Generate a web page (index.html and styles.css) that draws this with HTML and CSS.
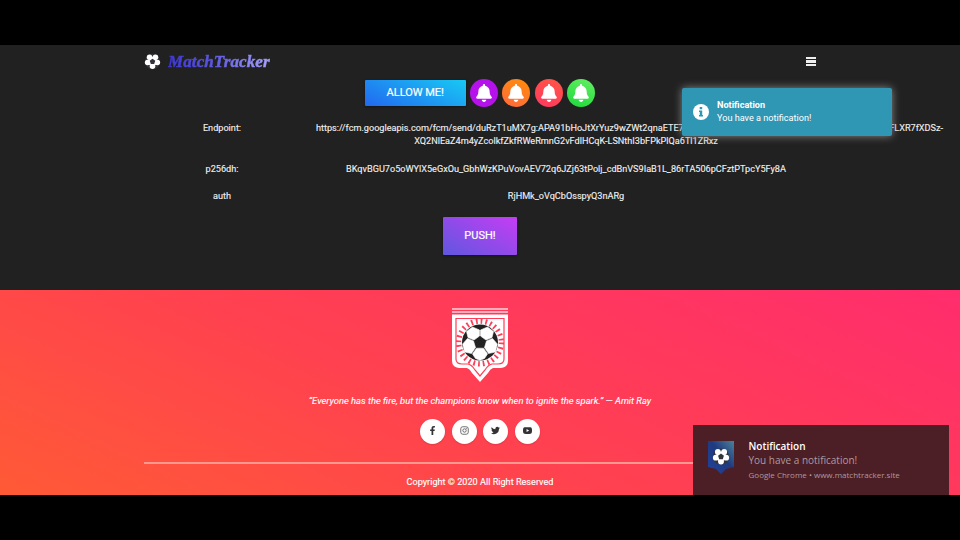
FILE: index.html
```html
<!DOCTYPE html>
<html lang="en">
<head>
<meta charset="utf-8">
<title>MatchTracker</title>
<link rel="stylesheet" href="styles.css">
</head>
<body>
<svg class="defs" aria-hidden="true">
  <symbol id="bell" viewBox="0 0 448 512"><path d="M224 512c35.320 0 63.970-28.650 63.970-64H160.030c0 35.350 28.650 64 63.970 64zm215.390-149.710c-19.320-20.760-55.470-51.990-55.470-154.290 0-77.700-54.480-139.900-127.940-155.160V32c0-17.670-14.320-32-31.980-32s-31.980 14.330-31.980 32v20.840C118.560 68.100 64.080 130.300 64.080 208c0 102.300-36.150 133.530-55.470 154.290-6 6.450-8.660 14.160-8.610 21.710.11 16.400 12.980 32 32.100 32h383.800c19.120 0 32-15.600 32.100-32 .05-7.550-2.610-15.270-8.610-21.710z"/></symbol>
  <symbol id="star" viewBox="0 0 40 40">
    <circle cx="20" cy="20" r="18" fill="#34343c"/>
    <g fill="#fff">
      <circle cx="13" cy="10" r="6.500"/><circle cx="27" cy="10" r="6.500"/>
      <circle cx="8.500" cy="22.500" r="6.500"/><circle cx="31.500" cy="22.500" r="6.500"/>
      <circle cx="20" cy="31" r="6.500"/><circle cx="20" cy="20" r="11"/>
    </g>
    <path d="M20 13.500 26.500 18.300 24 26H16L13.500 18.300Z" fill="#34343c"/>
  </symbol>
</svg>
<div class="stage">
  <header class="nav">
    <a class="brand"><svg class="brand-ball"><use href="#star"/></svg><span class="brand-name">MatchTracker</span></a>
    <div class="burger"><i></i><i></i><i></i></div>
  </header>
  <main>
    <div class="actions">
      <button class="btn allow">ALLOW ME!</button>
      <span class="bell purple"><svg><use href="#bell"/></svg></span>
      <span class="bell orange"><svg><use href="#bell"/></svg></span>
      <span class="bell red"><svg><use href="#bell"/></svg></span>
      <span class="bell green"><svg><use href="#bell"/></svg></span>
    </div>
    <div class="details">
      <div class="label">Endpoint:</div>
      <div class="value">
        <div class="long"><span>https://fcm.googleapis.com/fcm/send/duRzT1uMX7g:APA91bHoJtXrYuz9wZWt2qnaETE7</span><span>FLXR7fXDSz-</span></div>
        <span>XQ2NlEaZ4m4yZcolkfZkfRWeRmnG2vFdlHCqK-LSNthI3bFPkPlQa6Tl1ZRxz</span>
      </div>
      <div class="label">p256dh:</div>
      <div class="value">BKqvBGU7o5oWYlX5eGxOu_GbhWzKPuVovAEV72q6JZj63tPolj_cdBnVS9IaB1L_86rTA506pCFztPTpcY5Fy8A</div>
      <div class="label">auth</div>
      <div class="value">RjHMk_oVqCbOsspyQ3nARg</div>
    </div>
    <button class="btn push">PUSH!</button>
  </main>
  <footer>
    <svg class="crest" viewBox="0 0 56 74">
      <path d="M0 1H56M0 4H56" stroke="#ffd5dc" stroke-width="1.400"/>
      <path d="M0 6.500H56V53Q56 59 49 60H41Q38 61 36 65L28 74 20 65Q18 61 15 60H7Q0 59 0 53Z" fill="#fff"/>
      <path d="M4 10.500H52V51Q52 56 46 56H40Q36 57 33 62L28 68 23 62Q20 57 16 56H10Q4 56 4 51Z" fill="#fff" stroke="#ff3d58" stroke-width="1.200"/>
      <circle cx="28" cy="34.500" r="20.800" fill="none" stroke="#ff3d58" stroke-width="6.500" stroke-dasharray="1.700 2.968"/>
      <circle cx="28" cy="34.500" r="18.800" fill="#fff"/>
      <circle cx="28" cy="34.500" r="18" fill="#222"/>
      <g fill="#fff" stroke="#fff" stroke-width=".6" stroke-linejoin="round">
        <path d="M27.500 22V28L22 32 16 29.500 14.500 23.500 20.500 19Z"/>
        <path d="M28.500 22V28L34 32 40 29.500 41.500 23.500 35.500 19Z"/>
        <path d="M15.500 30.500 21.500 33 23.500 39.500 19.500 45.500 12.500 44 10.700 36Z"/>
        <path d="M40.500 30.500 34.500 33 32.500 39.500 36.500 45.500 43.500 44 45.300 36Z"/>
        <path d="M24.500 40.200H31.500L35.500 46 32.500 50.500 28 52.300 23.500 50.500 20.500 46Z"/>
      </g>
    </svg>
    <p class="quote">“Everyone has the fire, but the champions know when to ignite the spark.” — Amit Ray</p>
    <div class="social">
      <a><svg viewBox="0 0 320 512"><path d="M279 288l14-93h-89v-60c0-25 12-50 52-50h41V7s-37-7-72-7c-73 0-121 44-121 125v70H23v93h81v224h100V288z"/></svg></a>
      <a><svg class="line" viewBox="0 0 24 24"><rect x="2" y="2" width="20" height="20" rx="5.500"/><circle cx="12" cy="12" r="4.500"/><circle cx="17.500" cy="6.500" r=".6"/></svg></a>
      <a><svg viewBox="0 0 24 24"><path d="M24 4.600a10 10 0 0 1-2.800.8 5 5 0 0 0 2.100-2.700 10 10 0 0 1-3.100 1.200 4.900 4.900 0 0 0-8.400 4.500A14 14 0 0 1 1.700 3.200a4.900 4.900 0 0 0 1.500 6.500 5 5 0 0 1-2.200-.6v.1a4.900 4.900 0 0 0 3.900 4.800 5 5 0 0 1-2.200.1 4.900 4.900 0 0 0 4.600 3.400A9.900 9.900 0 0 1 0 19.500 14 14 0 0 0 21.500 7.100 10 10 0 0 0 24 4.600z"/></svg></a>
      <a><svg viewBox="0 0 24 24"><path fill-rule="evenodd" d="M4 3.500Q12 2.500 20 3.500 23.500 4 23.700 8 24.300 12 23.700 16 23.500 20 20 20.500 12 21.500 4 20.500.5 20 .3 16-.3 12 .3 8 .5 4 4 3.500ZM9.500 8V16L16.500 12Z"/></svg></a>
    </div>
    <div class="copyright">Copyright © 2020 All Right Reserved</div>
  </footer>
  <div class="toast">
    <svg viewBox="0 0 16 16"><circle cx="8" cy="8" r="8" fill="#fff"/><path d="M6.700 3h2.500v2.300H6.700ZM6 6.500H9.200V11H10V12.500H6V11H6.800V8H6Z" fill="#2f96b4"/></svg>
    <div><b>Notification</b><span>You have a notification!</span></div>
  </div>
  <div class="desktop-note">
    <svg viewBox="0 0 26 34">
      <defs><linearGradient id="sh" x1="0" y1="1" x2="1" y2="0"><stop offset="0" stop-color="#22439c"/><stop offset=".55" stop-color="#203a80"/><stop offset="1" stop-color="#4b8298"/></linearGradient></defs>
      <path d="M0 1H26V27L18 29 13 34 8 29 0 27Z" fill="url(#sh)"/>
      <use href="#star" x="4" y="7.500" width="18" height="18"/>
    </svg>
    <div><b>Notification</b><span class="msg">You have a notification!</span><span class="src">Google Chrome • www.matchtracker.site</span></div>
  </div>
</div>
</body>
</html>
```
FILE: styles.css
```css
* { box-sizing: border-box; }
body { margin: 0; height: 540px; padding: 45px 0; background: #000; overflow: hidden; font-family: Roboto, sans-serif; color: #f0f0f0; }
.defs { display: none; }
.stage { position: relative; height: 450px; background: #212121; overflow: hidden; display: flex; flex-direction: column; }
.nav { height: 34px; width: 672px; margin: 0 auto; padding-bottom: 1px; display: flex; align-items: center; justify-content: space-between; flex: none; }
.brand { display: flex; align-items: center; gap: 7px; }
.brand-ball { width: 17px; height: 17px; }
.brand-name { padding-right: 3px; font: italic 900 17px/20px "Liberation Serif", serif; letter-spacing: .1px; background: linear-gradient(90deg, #3d37d3, #5954e0 40%, #aaa6ff); -webkit-background-clip: text; background-clip: text; color: transparent; -webkit-text-stroke: .5px transparent; }
.burger { display: flex; flex-direction: column; gap: 1px; }
.burger i { width: 10px; height: 2.5px; background: #eee; }
main { height: 211px; flex: none; display: flex; flex-direction: column; align-items: center; }
.actions { display: flex; align-items: center; gap: 4.5px; height: 28px; flex: none; }
.btn { border: 0; border-radius: 1px; padding: 0 0 1px; color: #fff; font: 400 11px Roboto, sans-serif; -webkit-text-stroke: .2px #fff; box-shadow: 0 1px 3px #0006; flex: none; }
.allow { width: 101px; height: 26px; margin-right: -.5px; background: linear-gradient(25deg, #2268f0, #18c9f4); }
.push { width: 74px; height: 38px; margin-top: 6.5px; background: linear-gradient(30deg, #5f57df, #c63df5); }
.bell { width: 28px; height: 28px; border-radius: 50%; display: grid; place-items: center; }
.bell svg { width: 16px; height: 18px; fill: #fff; }
.purple { background: #b512eb; }
.orange { background: linear-gradient(20deg, #ff6840, #ff8d08); }
.red { background: linear-gradient(20deg, #ff3860, #ff5645); }
.green { background: linear-gradient(20deg, #1cd83b, #65ef62); }
.details { width: 672px; margin-top: 7.5px; display: grid; grid-template-columns: 156px 500px; column-gap: 16px; text-align: center; font-size: 9.13px; line-height: 13.5px; -webkit-text-stroke: .12px #f0f0f0; }
.label, .value { padding: 7px 0; white-space: nowrap; }
.long { width: 627px; display: flex; justify-content: space-between; }
footer { height: 205px; flex: none; padding-top: 18px; display: flex; flex-direction: column; align-items: center; background: linear-gradient(25deg, #ff5a36, #ff4150 45%, #ff2d6d); }
.crest { width: 56px; height: 74px; flex: none; }
.quote { margin: 12px 0 0; font-size: 9.4px; line-height: 14px; font-style: italic; white-space: nowrap; color: #fff; -webkit-text-stroke: .1px #fff; }
.social { display: flex; gap: 6.5px; margin-top: 11px; }
.social a { width: 25px; height: 25px; border-radius: 50%; background: #fff; display: grid; place-items: center; box-shadow: 0 1px 2px #0002; }
.social svg { width: 9px; height: 9px; fill: #333; margin-bottom: 2px; }
.social .line { fill: none; stroke: #444; stroke-width: 2; }
.copyright { width: 672px; margin-top: 18px; border-top: 2px solid #ff9990; padding-top: 10.5px; text-align: center; font-size: 9.13px; line-height: 14px; color: #fff; -webkit-text-stroke: .12px #fff; }
.toast { position: absolute; left: 682px; top: 43px; width: 210px; height: 48px; border-radius: 2px; background: #2f96b4; box-shadow: 0 0 8px #888; display: flex; align-items: center; padding-left: 11px; gap: 8px; color: #fff; font-size: 9.15px; line-height: 13.5px; }
.toast svg { width: 16px; height: 16px; }
.toast b, .toast span, .desktop-note b, .desktop-note span { display: block; white-space: nowrap; }
.desktop-note { position: absolute; left: 693px; top: 380px; width: 256px; height: 70px; background: #4c1e25; padding: 14px 0 0 15px; display: flex; gap: 14.5px; font-family: "Open Sans", sans-serif; }
.desktop-note svg { width: 26px; height: 34px; flex: none; margin-top: 1px; }
.desktop-note b { font-size: 10px; line-height: 14px; font-weight: 600; color: #fff; }
.desktop-note .msg { font-size: 10px; line-height: 14px; color: #b09a9d; }
.desktop-note .src { font-size: 8px; line-height: 15px; color: #b09a9d; }
```
